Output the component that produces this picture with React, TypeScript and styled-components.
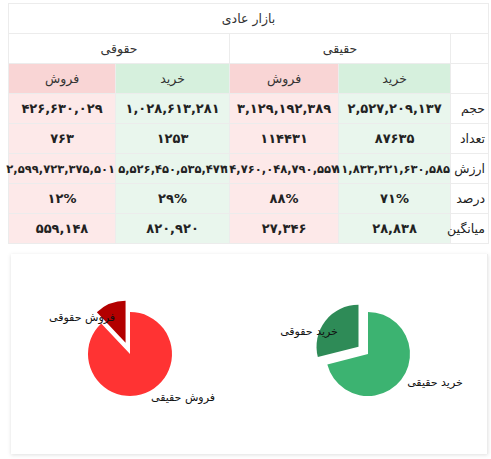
import React from 'react';
import styled, { createGlobalStyle, css } from 'styled-components';

const GlobalStyle = createGlobalStyle`
  body {
    margin: 0;
    background: #fff;
    font-family: "DejaVu Sans", "Noto Sans", sans-serif;
  }
`;

const Page = styled.div`
  padding: 3px 3px 6px 8px;
  width: 480px;
`;

const Table = styled.table`
  direction: rtl;
  width: 480px;
  table-layout: fixed;
  border-collapse: collapse;
  font-size: 13px;
  color: #222;
`;

type Tone = 'plain' | 'buy' | 'sell' | 'label';

const toneStyles = {
  plain: css`background: #fff;`,
  label: css`background: #fff; text-align: right; padding-right: 3px; font-weight: normal; font-size: 12.5px;`,
  buy: css`background: #e9f6ed;`,
  sell: css`background: #fde9e9;`,
};

const Cell = styled.td<{ $tone?: Tone; $head?: boolean }>`
  height: 29px;
  padding: 0;
  border: 1px solid #ececec;
  text-align: center;
  white-space: nowrap;
  overflow: visible;
  font-weight: bold;
  ${({ $tone = 'plain' }) => toneStyles[$tone]}
  ${({ $head, $tone }) =>
    $head &&
    css`
      font-weight: normal;
      font-size: 12.5px;
      color: #333;
      background: ${$tone === 'buy' ? '#d6f0dd' : $tone === 'sell' ? '#f9d5d5' : '#fff'};
    `}
`;

const Wide = styled.span`
  font-size: 11.5px;
  letter-spacing: -0.4px;
`;

const ChartPanel = styled.div`
  margin: 10px 0 0 3px;
  height: 200px;
  background: #fff;
  box-shadow: 0 1px 4px rgba(0, 0, 0, 0.13);
  display: grid;
  grid-template-columns: 1fr 1fr;
`;

const ChartCell = styled.div<{ $divider?: boolean }>`
  display: flex;
  align-items: center;
  justify-content: center;
  ${({ $divider }) => $divider && css`border-right: 1px solid #ececec;`}
`;

const Label = styled.text`
  font-family: "DejaVu Sans", sans-serif;
  font-size: 11px;
  fill: #111;
  direction: rtl;
`;

type Row = { label: string; values: string[]; wide?: boolean };

const rows: Row[] = [
  { label: 'حجم', values: ['۲,۵۲۷,۲۰۹,۱۳۷', '۳,۱۲۹,۱۹۲,۳۸۹', '۱,۰۲۸,۶۱۳,۲۸۱', '۴۲۶,۶۳۰,۰۲۹'] },
  { label: 'تعداد', values: ['۸۷۶۳۵', '۱۱۴۴۳۱', '۱۲۵۳', '۷۶۳'] },
  {
    label: 'ارزش',
    values: ['۱۱,۸۳۳,۳۲۱,۶۳۰,۵۸۵', '۱۴,۷۶۰,۰۴۸,۷۹۰,۵۵۷', '۵,۵۲۶,۴۵۰,۵۳۵,۴۷۳', '۲,۵۹۹,۷۲۳,۳۷۵,۵۰۱'],
    wide: true,
  },
  { label: 'درصد', values: ['۷۱%', '۸۸%', '۲۹%', '۱۲%'] },
  { label: 'میانگین', values: ['۲۸,۸۳۸', '۲۷,۳۴۶', '۸۲۰,۹۲۰', '۵۵۹,۱۴۸'] },
];

const tones: Tone[] = ['buy', 'sell', 'buy', 'sell'];

// angles are degrees clockwise from 12 o'clock
const pt = (r: number, a: number) => {
  const rad = (a * Math.PI) / 180;
  return [r * Math.sin(rad), -r * Math.cos(rad)];
};

const slicePath = (r: number, start: number, end: number) => {
  const [x1, y1] = pt(r, start);
  const [x2, y2] = pt(r, end);
  const large = end - start > 180 ? 1 : 0;
  return `M0 0 L${x1} ${y1} A${r} ${r} 0 ${large} 1 ${x2} ${y2} Z`;
};

type PieProps = {
  share: number;
  main: string;
  minor: string;
  mainLabel: string;
  minorLabel: string;
  mainPos: [number, number];
  minorPos: [number, number];
};

const Pie = ({ share, main, minor, mainLabel, minorLabel, mainPos, minorPos }: PieProps) => {
  const r = 42;
  const split = share * 360;
  const [ox, oy] = pt(12, (split + 360) / 2);
  return (
    <svg width="238" height="200" viewBox="-119 -100 238 200">
      <path d={slicePath(r, 0, split)} fill={main} />
      <path d={slicePath(r, split, 360)} fill={minor} transform={`translate(${ox} ${oy})`} />
      <Label x={minorPos[0]} y={minorPos[1] + 4} textAnchor="middle">
        {minorLabel}
      </Label>
      <Label x={mainPos[0]} y={mainPos[1] + 4} textAnchor="middle">
        {mainLabel}
      </Label>
    </svg>
  );
};

export default function App() {
  return (
    <Page>
      <GlobalStyle />
      <Table>
        <colgroup>
          <col style={{ width: 38 }} />
          <col style={{ width: 112 }} />
          <col style={{ width: 109 }} />
          <col style={{ width: 114 }} />
          <col style={{ width: 107 }} />
        </colgroup>
        <tbody>
          <tr>
            <Cell $head colSpan={5}>بازار عادی</Cell>
          </tr>
          <tr>
            <Cell $head />
            <Cell $head colSpan={2}>حقیقی</Cell>
            <Cell $head colSpan={2}>حقوقی</Cell>
          </tr>
          <tr>
            <Cell $head />
            <Cell $head $tone="buy">خرید</Cell>
            <Cell $head $tone="sell">فروش</Cell>
            <Cell $head $tone="buy">خرید</Cell>
            <Cell $head $tone="sell">فروش</Cell>
          </tr>
          {rows.map((row) => (
            <tr key={row.label}>
              <Cell $tone="label">{row.label}</Cell>
              {row.values.map((v, i) => (
                <Cell key={i} $tone={tones[i]}>
                  {row.wide ? <Wide>{v}</Wide> : v}
                </Cell>
              ))}
            </tr>
          ))}
        </tbody>
      </Table>
      <ChartPanel>
        <ChartCell>
          <Pie
            share={0.88}
            main="#ff3333"
            minor="#b30000"
            mainLabel="فروش حقیقی"
            minorLabel="فروش حقوقی"
            mainPos={[53, 43]}
            minorPos={[-48, -37]}
          />
        </ChartCell>
        <ChartCell $divider>
          <Pie
            share={0.71}
            main="#3cb371"
            minor="#2e8b57"
            mainLabel="خرید حقیقی"
            minorLabel="خرید حقوقی"
            mainPos={[67, 28]}
            minorPos={[-59, -23]}
          />
        </ChartCell>
      </ChartPanel>
    </Page>
  );
}
